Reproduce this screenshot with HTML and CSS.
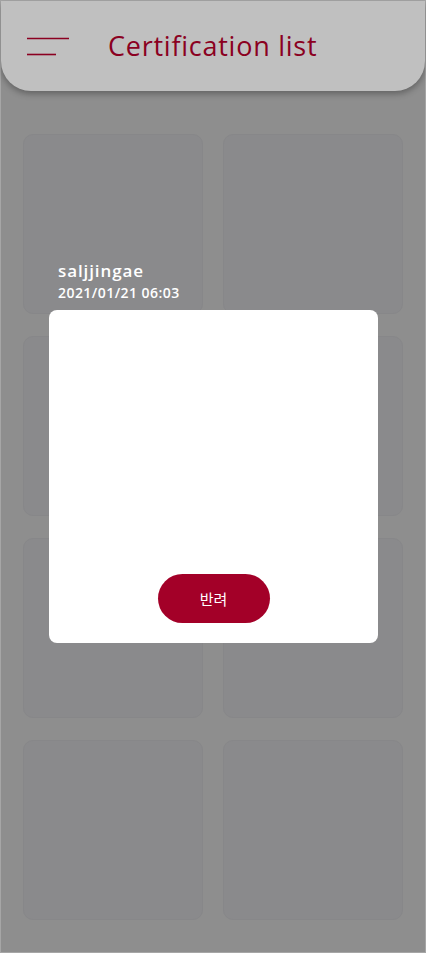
FILE: index.html
```html
<!DOCTYPE html>
<html lang="ko">
<head>
<meta charset="utf-8">
<title>Certification list</title>
<link rel="stylesheet" href="styles.css">
</head>
<body>
<div class="app">
  <header class="topbar">
    <svg class="menu" width="44" height="20" viewBox="0 0 44 20">
      <line x1="0" y1="1.5" x2="42" y2="1.5" stroke="#8b0021" stroke-width="1.6"/>
      <line x1="0" y1="17.5" x2="29" y2="17.5" stroke="#8b0021" stroke-width="1.6"/>
    </svg>
    <h1 class="title">Certification list</h1>
  </header>
  <main class="grid">
    <div class="card"></div>
    <div class="card"></div>
    <div class="card"></div>
    <div class="card"></div>
    <div class="card"></div>
    <div class="card"></div>
    <div class="card"></div>
    <div class="card"></div>
  </main>
  <div class="popup">
    <div class="info">
      <div class="name">saljjingae</div>
      <div class="date">2021/01/21 06:03</div>
    </div>
    <div class="modal">
      <button class="reject">반려</button>
    </div>
  </div>
</div>
</body>
</html>
```
FILE: styles.css
```css
* { box-sizing: border-box; }
html, body { margin: 0; padding: 0; }
body {
  width: 426px;
  height: 953px;
  background: #8e8e8e;
  font-family: "Open Sans", "Noto Sans", sans-serif;
  overflow: hidden;
}
.app {
  position: relative;
  width: 426px;
  height: 953px;
  border: 1px solid #a6a6a6;
  background: #8e8e8e;
}
.topbar {
  height: 90px;
  background: #c0c0c0;
  border-radius: 0 0 30px 30px;
  box-shadow: 0 3px 6px rgba(0,0,0,0.3);
  display: flex;
  align-items: center;
  padding-left: 26px;
  padding-bottom: 2px;
}
.menu { display: block; margin-top: 4px; }
.title {
  margin: 0 0 0 37px;
  font-weight: 400;
  font-size: 27px;
  letter-spacing: 0.75px;
  color: #8b0021;
}
.grid {
  display: grid;
  grid-template-columns: 180px 180px;
  grid-auto-rows: 180px;
  column-gap: 20px;
  row-gap: 22px;
  padding: 43px 0 0 22px;
}
.card {
  background: #8a8a8c;
  border: 1px solid #878789;
  border-radius: 10px;
}
.popup {
  position: absolute;
  left: 48px;
  top: 259px;
  width: 329px;
}
.info {
  padding-left: 9px;
  color: #ffffff;
  font-family: "Open Sans", sans-serif;
  height: 50px;
}
.name { font-size: 17px; font-weight: 600; line-height: 22px; letter-spacing: 0.9px; }
.date { font-size: 14px; font-weight: 600; line-height: 22px; letter-spacing: 0.45px; }
.modal {
  height: 333px;
  background: #ffffff;
  border-radius: 8px;
  display: flex;
  flex-direction: column;
  justify-content: flex-end;
  align-items: center;
  padding-bottom: 20px;
}
.reject {
  width: 112px;
  height: 49px;
  border: none;
  border-radius: 25px;
  background: #a30028;
  color: #ffffff;
  font-family: "Noto Sans CJK KR", sans-serif;
  font-size: 15px;
  padding: 0;
}
```
